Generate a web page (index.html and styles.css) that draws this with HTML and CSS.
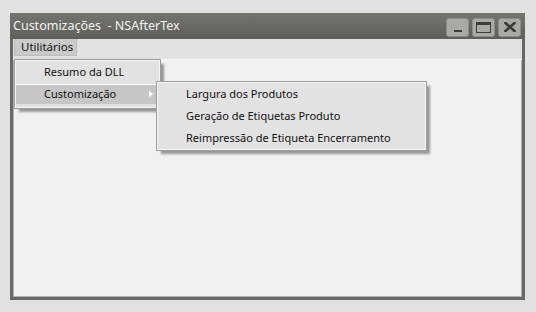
FILE: index.html
```html
<!DOCTYPE html>
<html lang="pt">
<head>
  <meta charset="UTF-8">
  <title>Customizações - NSAfterTex</title>
  <link rel="stylesheet" href="styles.css">
</head>
<body>
  <div class="window">
    <!-- Title Bar -->
    <div class="title-bar">
      <span class="title">Customizações&nbsp; - NSAfterTex</span>
      <div class="controls">
        <span class="btn btn-min"><span class="glyph-min"></span></span>
        <span class="btn btn-max"><span class="glyph-max"></span></span>
        <span class="btn btn-close">
          <svg width="12" height="10" viewBox="0 0 12 10">
            <path d="M1.5 1 L10.5 9 M10.5 1 L1.5 9" stroke="#3c3c3c" stroke-width="2.6" stroke-linecap="square"/>
          </svg>
        </span>
      </div>
    </div>

    <div class="frame">
      <!-- Menu Bar -->
      <div class="menu-bar">
        <span class="menu-top active">Utilitários</span>
      </div>
      <div class="client"></div>

      <!-- Dropdown -->
      <div class="menu menu-main">
        <div class="menu-item">Resumo da DLL</div>
        <div class="menu-item selected">Customização<span class="arrow"></span></div>
      </div>

      <!-- Submenu -->
      <div class="menu menu-sub">
        <div class="menu-item">Largura dos Produtos</div>
        <div class="menu-item">Geração de Etiquetas Produto</div>
        <div class="menu-item">Reimpressão de Etiqueta Encerramento</div>
      </div>
    </div>
  </div>
</body>
</html>
```

FILE: styles.css
```css
body {
  margin: 0;
  background-color: #e1e1e1;
  font-family: "Noto Sans", "Open Sans", sans-serif;
  font-size: 11px;
  color: #111111;
}

/* Window */
.window {
  margin: 13px 0 0 10px;
  width: 515px;
}

.title-bar {
  height: 26px;
  display: flex;
  align-items: center;
  justify-content: space-between;
  background: linear-gradient(#747470, #5e5e5a);
  padding: 0 3px;
}
.title {
  color: #f4f4f4;
  font-size: 12.5px;
  white-space: pre;
  margin-top: -1px;
}
.controls {
  display: flex;
  gap: 3px;
  margin-top: 2px;
  margin-right: 1px;
}
.btn {
  width: 21px;
  height: 17px;
  background-color: #a9a9a7;
  border: 1px solid #8c8c8a;
  border-radius: 3px;
  display: flex;
  align-items: center;
  justify-content: center;
}
.glyph-min {
  width: 8px;
  height: 2px;
  background-color: #3c3c3c;
  margin-top: 7px;
}
.glyph-max {
  width: 13px;
  height: 7px;
  border: 1.5px solid #3c3c3c;
  border-top-width: 3px;
}

/* Frame */
.frame {
  position: relative;
  height: 258px;
  border: 3px solid #686868;
  border-top: none;
  background-color: #f0f0f0;
  box-shadow: inset 1px 0 0 #b4b4b4, inset -1px 0 0 #b4b4b4, inset 0 -1px 0 #b4b4b4;
}
.menu-bar {
  height: 20px;
  background-color: #e1e1e1;
  padding-left: 1px;
  display: flex;
  border-bottom: 1px solid #f6f6f6;
}
.menu-top {
  padding: 0 6px;
  height: 17px;
  line-height: 16px;
  background-color: #cacaca;
  border: 1px solid #bcbcbc;
  border-top: none;
  box-sizing: border-box;
  width: 63px;
  font-size: 11.5px;
}

/* Menus */
.menu {
  position: absolute;
  background-color: #e2e2e2;
  border: 1px solid #9c9c9c;
  padding: 1px;
  box-shadow: inset 0 0 0 1px #f4f4f4, 4px 4px 2px -1px rgba(80, 80, 80, 0.55);
}
.menu-item {
  height: 22px;
  line-height: 21px;
  padding-left: 28px;
  position: relative;
  white-space: nowrap;
}
.menu-main {
  left: 1px;
  top: 20px;
  width: 143px;
}
.menu-main .menu-item:first-child {
  height: 23px;
}
.menu-item.selected {
  background-color: #c6c6c6;
  border-top: 1px solid #fafafa;
  height: 19px;
  line-height: 18px;
  margin-bottom: 3px;
}
.arrow {
  position: absolute;
  left: 133px;
  top: 6px;
  border-left: 4px solid #ffffff;
  border-top: 3.5px solid transparent;
  border-bottom: 3.5px solid transparent;
}
.menu-sub {
  left: 143px;
  top: 42px;
  width: 267px;
}
```
